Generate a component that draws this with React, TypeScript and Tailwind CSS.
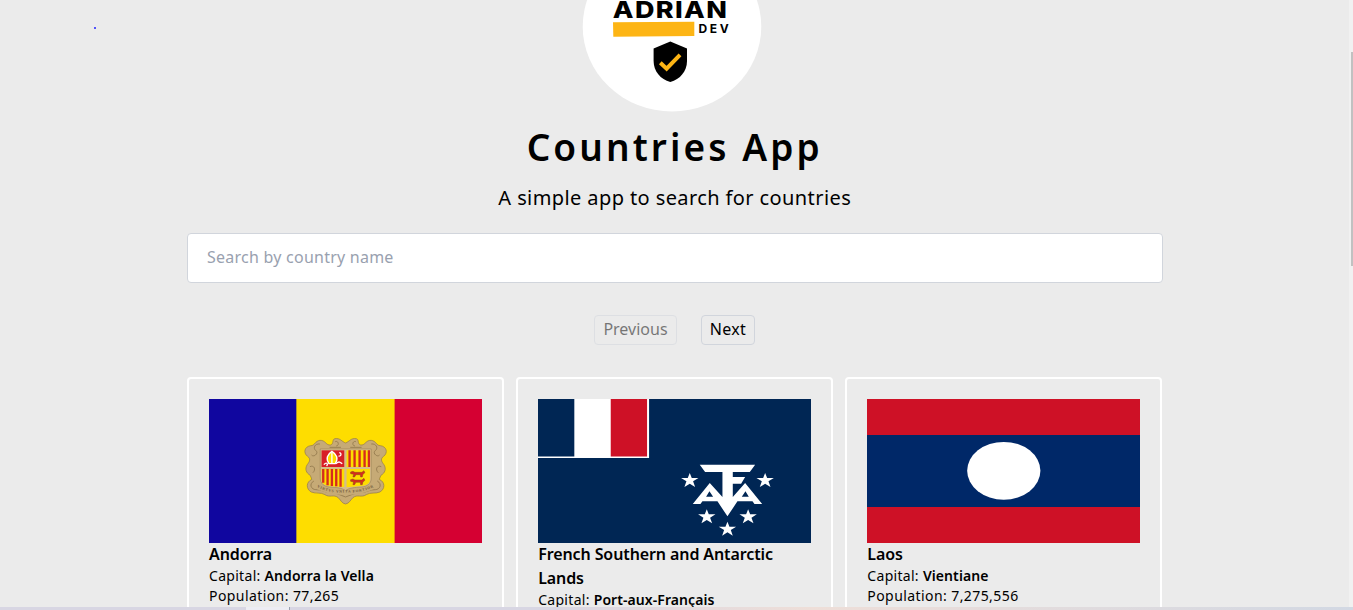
import type { ReactNode } from "react";

const STAR = "M0-22 L6-7 L26-7 L10 3 L16 20 L0 10 L-16 20 L-10 3 L-26-7 L-6-7 Z";

function Logo() {
  return (
    <svg className="block h-28 w-[180px]" viewBox="582 0 180 112" aria-label="Adrian Dev">
      <ellipse cx="672" cy="26.5" rx="89.3" ry="85" fill="#fff" />
      <text x="612.8" y="17.6" textLength="115.5" lengthAdjust="spacingAndGlyphs" letterSpacing="1.2" fontFamily="Inter, sans-serif" fontWeight="800" fontSize="23.5">
        ADRIAN
      </text>
      <path d="M613 22.3 694.3 21.8V36L613.3 36.8Z" fill="#fdb515" />
      <text x="698.6" y="33" textLength="30" fontFamily="Inter, sans-serif" fontWeight="700" fontSize="12">
        DEV
      </text>
      <path d="M670.3 41.6 687 48.6V61C687 71 680 79.5 670.3 82C660.500 79.500 653.600 71 653.600 61V48.600Z" />
      <path d="M660.300 62.700 666.600 68.600 680 54.800" fill="none" stroke="#fdb515" strokeWidth="4" />
    </svg>
  );
}

function AndorraFlag() {
  return (
    <svg className="block h-36 w-full" viewBox="0 0 273 144" preserveAspectRatio="none">
      <path fill="#10069f" d="M0 0H88V144H0Z" />
      <path fill="#fedd00" d="M87.300 0H186V144H87.300Z" />
      <path fill="#d50032" d="M185.500 0H273V144H185.500Z" />
      <g transform="translate(80.500 26) scale(.33333)">
        <path
          fill="#c6aa76"
          stroke="#90774c"
          strokeWidth="2"
          d="M168 54C157 50 151 38 136 41C126 44 134 56 123 60C109 62 108 45 91 46C76 48 76 62 64 62C45 64 40 83 54 94C64 101 61 109 53 119C45 132 50 144 62 151L67 163C49 171 49 192 65 201C79 207 93 201 106 209C121 219 132 207 146 218C154 226 157 235 168 237C179 235 182 226 190 218C204 207 215 219 230 209C243 201 257 207 271 201C287 192 287 171 269 163L274 151C286 144 291 132 283 119C275 109 272 101 282 94C296 83 291 64 272 62C260 62 260 48 245 46C228 45 227 62 213 60C202 56 210 44 200 41C185 38 179 50 168 54Z"
        />
        <g fill="none" stroke="#90774c" strokeWidth="2.500">
          <path d="M91 57C76 55 69 69 79 77S72 98 66 90M245 57C260 55 267 69 257 77S264 98 270 90M137 50C147 46 150 62 140 63M199 50C189 46 186 62 196 63M61 125C74 119 80 134 70 143M275 125C262 119 256 134 266 143M120 67H154M182 67H216" />
          <path d="M73 168C57 177 65 194 79 194C94 193 105 202 119 202C137 202 149 209 168 216C187 209 199 202 217 202C231 202 242 193 257 194C271 194 279 177 263 168" />
        </g>
        <path fill="#d5bd8a" stroke="#90774c" strokeWidth="1.500" d="M92 72H245V159C245 177 231 184 217 186C195 187 177 189 168 197C159 189 141 187 119 186C105 184 92 177 92 159Z" />
        <path fill="#d81f27" d="M96 76H164V126H96Z" />
        <path fill="#fedd00" d="M171 76H241V126H171Z" />
        <path stroke="#d52b1e" strokeWidth="7" d="M180 76V126M195 76V126M210 76V126M225 76V126M238 76V126" />
        <path fill="#fedd00" d="M96 132H164V186C145 184 131 184 117 182C103 180 96 174 96 164Z" />
        <path stroke="#d52b1e" strokeWidth="7" d="M101 132V173M114 132V181M127 132V183M140 132V184M153 132V185" />
        <path fill="#fedd00" d="M171 132H241V164C241 174 233 180 219 182L171 187Z" />
        <path fill="#d52b1e" stroke="#86501b" strokeWidth="1.500" d="M183 141L190 139L196 142H217L223 137L226 143L220 148L218 156H213L212 149H199L195 156H190L192 148L183 146ZM183 164L190 162L196 165H217L223 160L226 166L220 171L218 179H213L212 172H199L195 179H190L192 171L183 169Z" />
        <path fill="#fedd00" stroke="#fff" strokeWidth="4" d="M127 79C113 88 108 101 118 116H137C147 101 142 88 127 79Z" />
        <path fill="none" stroke="#fff" strokeWidth="4" d="M127 82V114M103 119C111 110 117 117 111 123M149 83C157 84 155 95 147 93M139 116C148 108 152 111 158 116" />
        <path id="andorra-motto" d="M82 186Q125 207 168 202Q211 207 256 184" fill="none" stroke="#c6aa76" strokeWidth="12" />
        <text fontSize="11" fontFamily="Liberation Serif, serif" fontWeight="700" fill="#6e5839">
          <textPath href="#andorra-motto" textLength="175">VIRTVS VNITA FORTIOR</textPath>
        </text>
      </g>
    </svg>
  );
}

function AntarcticFlag() {
  return (
    <svg className="block h-36 w-full" viewBox="0 0 273 144" preserveAspectRatio="none">
      <path fill="#002654" d="M0 0H273V144H0Z" />
      <path fill="#fff" d="M0 0H111V59H0Z" />
      <path fill="#002654" d="M0 0H36.300V57.500H0Z" />
      <path fill="#ce1126" d="M72.700 0H109V57.500H72.700Z" />
      <g fill="#fff" transform="translate(132 56) scale(.33333)">
        <path
          fillRule="evenodd"
          d="M89 29H255L239 51H188V66H225L213 86H188V126L225 84L276 147H253L247 139H202L172 184L142 139H97L91 147H68L119 84L157 126V51H105ZM118 109L108 125H129ZM226 109L215 125H236Z"
        />
        <path d={STAR} transform="translate(59 76)" />
        <path d={STAR} transform="translate(285 76)" />
        <path d={STAR} transform="translate(110 185)" />
        <path d={STAR} transform="translate(234 185)" />
        <path d={STAR} transform="translate(172 222)" />
      </g>
    </svg>
  );
}

function LaosFlag() {
  return (
    <svg className="block h-36 w-full" viewBox="0 0 273 144" preserveAspectRatio="none">
      <path fill="#ce1126" d="M0 0H273V144H0Z" />
      <path fill="#002868" d="M0 36H273V108H0Z" />
      <ellipse cx="136.700" cy="71.800" rx="36.600" ry="28.900" fill="#fff" />
    </svg>
  );
}

type CountryProps = { flag: ReactNode; name: string; capital: string; population: string };

function CountryCard({ flag, name, capital, population }: CountryProps) {
  return (
    <article className="min-w-0 rounded border-2 border-white p-5">
      {flag}
      <div className="-mt-px">
        <h2 className="text-base font-semibold tracking-[-0.1px]">{name}</h2>
        <p className="text-sm tracking-[0.3px]">
          Capital: <span className="font-semibold tracking-[0.08px]">{capital}</span>
        </p>
        <p className="text-sm tracking-[0.42px]">Population: {population}</p>
      </div>
    </article>
  );
}

export default function App() {
  return (
    <div className="relative flex h-[610px] flex-col overflow-hidden bg-[#ebebeb] font-['Noto_Sans',sans-serif] text-black">
      <main className="ml-[187px] flex min-h-0 w-[975.5px] flex-1 flex-col overflow-hidden">
        <header className="flex flex-col items-center">
          <div className="mr-[5.5px]">
            <Logo />
          </div>
          <h1 className="mt-[15px] text-[37px] leading-10 font-semibold tracking-[3.1px]">Countries App</h1>
          <p className="mt-[17px] text-xl tracking-[0.4px]">A simple app to search for countries</p>
        </header>
        <input
          className="mt-[21px] h-[50px] w-full shrink-0 rounded border border-gray-300 bg-white pr-5 pb-0.5 pl-[19px] tracking-[0.24px] placeholder:text-gray-400"
          placeholder="Search by country name"
        />
        <nav className="mt-8 mr-[0.5px] flex justify-center gap-6">
          <button className="h-[30px] w-[83px] rounded border border-gray-300 pb-0.5 leading-6 opacity-50" disabled>Previous</button>
          <button className="h-[30px] w-[54px] rounded border border-gray-300 pb-0.5 leading-6 tracking-[0.3px]">Next</button>
        </nav>
        <section className="mt-8 grid h-[300px] shrink-0 grid-cols-3 gap-3">
          <CountryCard flag={<AndorraFlag />} name="Andorra" capital="Andorra la Vella" population="77,265" />
          <CountryCard flag={<AntarcticFlag />} name="French Southern and Antarctic Lands" capital="Port-aux-Français" population="400" />
          <CountryCard flag={<LaosFlag />} name="Laos" capital="Vientiane" population="7,275,556" />
        </section>
      </main>
      <footer className="flex h-[3px] shrink-0 bg-linear-to-r from-[#d8d6e3] from-40% via-[#eeded8] via-60% to-[#d2d8e3]">
        <div className="ml-[246px] h-full w-11 border-r border-gray-400 bg-[#ededf3]" />
      </footer>
      <div className="absolute top-[27px] left-[94px] size-0.5 rounded-full bg-[#2020ff]" />
      <div className="absolute top-0 right-0 flex h-[607px] w-1 justify-end bg-[#f1f1f1]">
        <div className="mt-[52px] h-[214px] w-0.5 bg-[#c1c1c1]" />
      </div>
    </div>
  );
}
